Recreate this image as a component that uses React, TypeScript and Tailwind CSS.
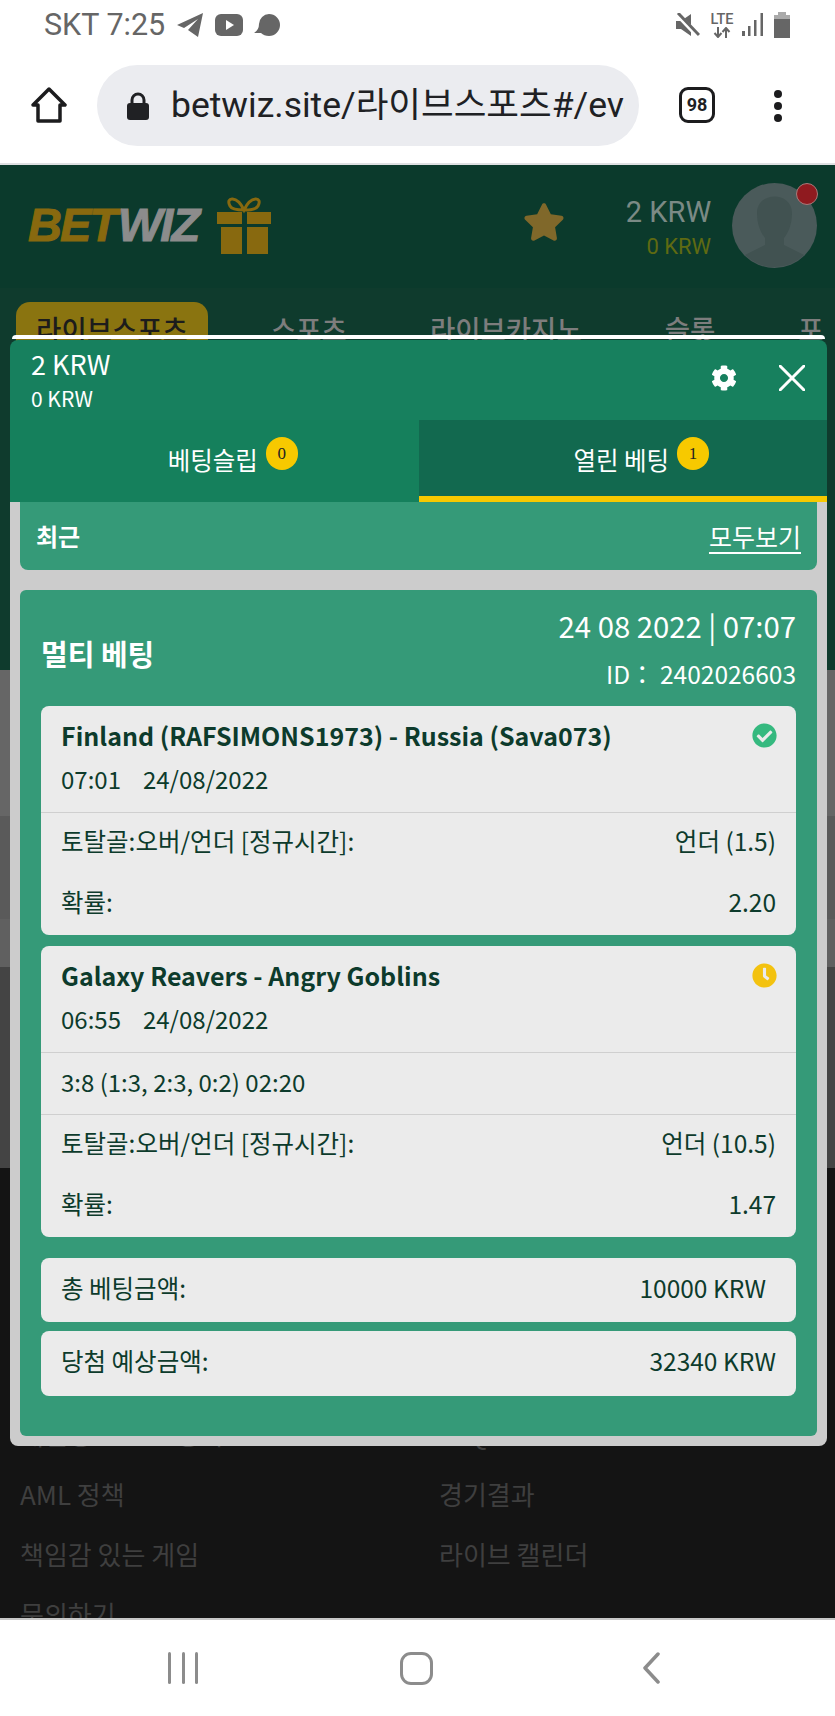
import { FaCheckCircle, FaClock, FaCog, FaStar } from 'react-icons/fa';

const kr = "font-['Noto_Sans_CJK_KR','Noto_Sans',sans-serif]";

function StatusBar() {
  return (
    <div className="flex h-[50px] items-center pl-[44px] pr-[45px] text-[#666]">
      <span className="font-['Roboto',sans-serif] text-[30.5px] leading-none">SKT 7:25</span>
      <svg className="ml-[12px] h-[24px] w-[27px]" viewBox="0 0 27 24" fill="#666">
        <path d="M26 0 L0 12 L7 15 L21 6 L11 17 L21 24 Z" />
      </svg>
      <svg className="ml-[11px] h-[22px] w-[28px]" viewBox="0 0 28 22">
        <rect width="28" height="22" rx="6" fill="#666" />
        <path d="M11 6 L19 11 L11 16 Z" fill="#fff" />
      </svg>
      <svg className="ml-[11px] h-[23px] w-[26px]" viewBox="0 0 26 23" fill="#666">
        <path d="M15 0 A11 11 0 0 1 15 22 Q10 22 7 19 L0 19 Q5 16 5 10 A10.500 10.500 0 0 1 15 0 Z" />
      </svg>
      <svg className="ml-auto h-[24px] w-[24px]" viewBox="0 0 24 24" fill="#666">
        <path d="M0 8 H5 L15 1 V23 L5 16 H0 Z" />
        <path d="M1 1 L22 23" stroke="#fff" strokeWidth="5" />
        <path d="M2 0 L23 22" stroke="#666" strokeWidth="3" />
      </svg>
      <div className="ml-[9px] flex w-[26px] flex-col items-center">
        <span className="font-['Roboto',sans-serif] text-[14.5px] font-medium leading-[13px]">LTE</span>
        <svg className="mt-[1px] h-[11px] w-[20px]" viewBox="0 0 20 11" fill="none" stroke="#666" strokeWidth="2">
          <path d="M6 0 V9 M2.500 6 L6 10 L9.500 6" />
          <path d="M14 11 V2 M10.500 5 L14 1 L17.500 5" />
        </svg>
      </div>
      <svg className="ml-[7px] h-[24px] w-[22px]" viewBox="0 0 22 24" fill="#666">
        <rect x="0" y="18" width="3" height="5" />
        <rect x="6" y="13" width="2.500" height="10" />
        <rect x="12" y="7" width="2.500" height="16" />
        <rect x="18.500" y="0" width="2.500" height="23" />
      </svg>
      <svg className="ml-[10px] h-[26px] w-[16px]" viewBox="0 0 16 26">
        <rect x="4" y="0" width="8" height="5" fill="#aaa" />
        <rect x="0" y="3" width="16" height="4" fill="#aaa" />
        <rect x="0" y="7" width="16" height="19" fill="#666" />
      </svg>
    </div>
  );
}

function BrowserBar() {
  return (
    <div className="flex h-[115px] items-start border-b-2 border-[#dfe0e2] pt-[15px] text-[#202124]">
      <svg className="ml-[31px] mt-[22px] h-[36px] w-[36px]" viewBox="0 0 36 36" fill="none" stroke="#1c1c1e" strokeWidth="3.500" strokeLinejoin="round">
        <path d="M18 2 L34 18 H29 V34 H7 V18 H2 Z" />
      </svg>
      <div className="ml-[30px] flex h-[81px] w-[542px] items-center overflow-hidden rounded-[41px] bg-[#ebecf0] pl-[30px]">
        <svg className="h-[28px] w-[22px] shrink-0" viewBox="0 0 22 28">
          <path d="M5 12 V8 A6 6 0 0 1 17 8 V12" fill="none" stroke="#202124" strokeWidth="3" />
          <rect x="0" y="11" width="22" height="17" rx="3" fill="#202124" />
        </svg>
        <div className="ml-[22px] w-[454px] overflow-hidden whitespace-nowrap font-['Roboto','Noto_Sans_CJK_KR',sans-serif] text-[35.5px] leading-none">
          betwiz.site/라이브스포츠#/event
        </div>
      </div>
      <div className="ml-[40px] mt-[22px] flex h-[36px] w-[36px] items-center justify-center rounded-[9px] border-[3.5px] border-[#1c1c1e] font-['Roboto',sans-serif] text-[18px] font-bold leading-none">
        98
      </div>
      <div className="ml-[59px] mt-[25px] flex flex-col gap-[4px]">
        <span className="h-[8px] w-[8px] rounded-full bg-[#1c1c1e]" />
        <span className="h-[8px] w-[8px] rounded-full bg-[#1c1c1e]" />
        <span className="h-[8px] w-[8px] rounded-full bg-[#1c1c1e]" />
      </div>
    </div>
  );
}

function SiteBehind() {
  return (
    <div className="flex min-h-0 flex-1 flex-col overflow-hidden bg-[#141414]">
      <div className="flex h-[123px] shrink-0 items-start bg-[#0b3a2c]">
        <div className="ml-[28px] mt-[35px] flex font-['Liberation_Sans',sans-serif] text-[47px] font-bold italic leading-[50px] tracking-[-2px]">
          <span className="text-[#88690f] [-webkit-text-stroke:1px_#88690f]">BET</span>
          <span className="ml-[2px] text-[#8c8c8c] [-webkit-text-stroke:1px_#8c8c8c]">WIZ</span>
        </div>
        <svg className="ml-[19px] mt-[30px] h-[60px] w-[54px]" viewBox="0 0 54 60" fill="#88690f">
          <path d="M27 15 C20 0 8 2 13 11 C15 15 22 15 27 15 C32 15 39 15 41 11 C46 2 34 0 27 15 Z" fill="none" stroke="#88690f" strokeWidth="3" />
          <rect x="0" y="17" width="25" height="12" />
          <rect x="30" y="17" width="24" height="12" />
          <rect x="4" y="32" width="21" height="27" />
          <rect x="30" y="32" width="21" height="27" />
        </svg>
        <FaStar className="ml-[252px] mt-[36px] text-[42px] text-[#80682a]" />
        <div className="ml-[0px] mt-[30px] flex w-[146px] flex-col items-end font-['Roboto',sans-serif]">
          <span className="text-[29px] leading-[34px] text-[#7b8a85]">2 KRW</span>
          <span className="mt-[3px] text-[22px] leading-[30px] text-[#5f6a12]">0 KRW</span>
        </div>
        <div className="relative ml-[21px] mt-[18px] h-[85px] w-[85px] rounded-full bg-[#4a5a5a]">
          <svg className="h-[85px] w-[85px]" viewBox="0 0 85 85" fill="#415251">
            <path d="M25 30 C25 8 60 8 60 30 C60 42 56 50 52 55 V62 L72 72 A42 42 0 0 1 13 72 L33 62 V55 C29 50 25 42 25 30 Z" />
          </svg>
          <span className="absolute right-[-1px] top-[0px] h-[22px] w-[22px] rounded-full border border-[#a87a7a] bg-[#8f1a1f]" />
        </div>
      </div>
      <div className={`flex h-[382px] shrink-0 items-start bg-[#0f3b2d] pt-[14px] text-[27.5px] font-medium leading-none text-[#7d7d7d] ${kr}`}>
        <div className="ml-[16px] flex h-[60px] w-[192px] justify-center rounded-[14px] bg-[#8a7410] pt-[13px] text-[#1c1c1c]">라이브스포츠</div>
        <div className="ml-[63px] pt-[13px]">스포츠</div>
        <div className="ml-[83px] pt-[13px]">라이브카지노</div>
        <div className="ml-[83px] pt-[13px]">슬롯</div>
        <div className="ml-[83px] pt-[13px]">포</div>
      </div>
      <div className="h-[146px] shrink-0 bg-[#666]" />
      <div className="h-[103px] shrink-0 bg-[#5a5a5a]" />
      <div className="h-[48px] shrink-0 bg-[#606060]" />
      <div className="h-[201px] shrink-0 bg-[#444]" />
      <div className={`grid grid-cols-[419px_1fr] gap-y-[24px] pl-[20px] pt-[248px] text-[26px] leading-[36px] text-[#3f3f3f] ${kr}`}>
        <span>개인정보 보호 정책</span>
        <span>FAQ</span>
        <span>AML 정책</span>
        <span>경기결과</span>
        <span>책임감 있는 게임</span>
        <span>라이브 캘린더</span>
        <span>문의하기</span>
      </div>
    </div>
  );
}

function Row({ label, value }: { label: string; value: string }) {
  return (
    <div className="flex h-[61px] items-center justify-between px-[20px] pb-[4px] text-[24.5px] leading-none">
      <span>{label}</span>
      <span>{value}</span>
    </div>
  );
}

function MatchHead({ title, time, date, done }: { title: string; time: string; date: string; done?: boolean }) {
  return (
    <div className="h-[107px] border-b border-[#cfcfcf] px-[20px] pt-[11px]">
      <div className="flex h-[36px] items-center justify-between">
        <span className="text-[25px] font-bold leading-none">{title}</span>
        {done ? (
          <FaCheckCircle className="mr-[-1px] text-[25px] text-[#35b97f]" />
        ) : (
          <FaClock className="mr-[-1px] text-[25px] text-[#f3c20f]" />
        )}
      </div>
      <div className="mt-[8px] flex h-[36px] items-center text-[24px] leading-none">
        <span>{time}</span>
        <span className="ml-[22px]">{date}</span>
      </div>
    </div>
  );
}

function Badge({ n }: { n: string }) {
  return (
    <span className="ml-[8px] flex h-[33px] w-[32px] items-center justify-center rounded-full bg-[#f7c900] font-['Liberation_Serif',serif] text-[17px] text-[#222]">
      {n}
    </span>
  );
}

function BetModal() {
  return (
    <div className={`absolute left-[10px] top-[335px] w-[817px] ${kr}`}>
      <div className="mx-[2px] mb-px h-[4px] rounded-t-[4px] bg-white" />
      <div className="flex h-[80px] items-start rounded-t-[8px] bg-[#17805e] pl-[21px] text-white">
        <div className="pt-[6px]">
          <div className="text-[27px] leading-[36px]">2 KRW</div>
          <div className="mt-[2px] text-[21px] leading-[28px]">0 KRW</div>
        </div>
        <FaCog className="ml-[600px] mt-[25px] text-[26px]" />
        <svg className="ml-[42px] mt-[25px] h-[26px] w-[26px]" viewBox="0 0 26 26" stroke="#fff" strokeWidth="3" strokeLinecap="round">
          <path d="M1 1 L25 25 M25 1 L1 25" />
        </svg>
      </div>
      <div className="grid h-[82px] grid-cols-2 text-[24.5px] leading-none text-white">
        <div className="flex items-start justify-center bg-[#15805c] pl-[37px] pt-[17px]">
          <span className="mt-[11px]">베팅슬립</span>
          <Badge n="0" />
        </div>
        <div className="flex items-start justify-center border-b-[6px] border-[#f7c900] bg-[#12694f] pl-[37px] pt-[17px]">
          <span className="mt-[11px]">열린 베팅</span>
          <Badge n="1" />
        </div>
      </div>
      <div className="rounded-b-[8px] bg-[#cccccc] px-[10px] pb-[10px]">
        <div className="flex h-[68px] items-center justify-between rounded-b-[8px] bg-[#359a78] pl-[16px] pr-[16px] text-[24px] leading-none text-white">
          <span className="font-bold">최근</span>
          <span className="text-[25px] underline underline-offset-[5px]">모두보기</span>
        </div>
        <div className="mt-[20px] h-[846px] rounded-[6px] bg-[#359a78] px-[21px] pt-[13px] text-[#0d3b2c]">
          <div className="flex h-[103px] items-start justify-between text-white">
            <span className="mt-[32px] text-[29px] font-bold leading-[36px]">멀티 베팅</span>
            <div className="flex flex-col items-end">
              <span className="text-[29.3px] leading-[44px]">24 08 2022 | 07:07</span>
              <span className="mt-[9px] text-[24.5px] leading-[36px]">ID： 2402026603</span>
            </div>
          </div>
          <div className="h-[229px] rounded-[8px] bg-[#ebebeb]">
            <MatchHead title="Finland (RAFSIMONS1973) - Russia (Sava073)" time="07:01" date="24/08/2022" done />
            <Row label="토탈골:오버/언더 [정규시간]:" value="언더 (1.5)" />
            <Row label="확률:" value="2.20" />
          </div>
          <div className="mt-[11px] h-[291px] rounded-[8px] bg-[#ebebeb]">
            <MatchHead title="Galaxy Reavers - Angry Goblins" time="06:55" date="24/08/2022" />
            <div className="flex h-[62px] items-center border-b border-[#cfcfcf] px-[20px] pb-[4px] text-[24px] leading-none">
              3:8 (1:3, 2:3, 0:2) 02:20
            </div>
            <Row label="토탈골:오버/언더 [정규시간]:" value="언더 (10.5)" />
            <Row label="확률:" value="1.47" />
          </div>
          <div className="mt-[21px] flex h-[64px] items-center justify-between rounded-[8px] bg-[#ebebeb] pb-[4px] pl-[20px] pr-[30px] text-[24.5px] leading-none">
            <span>총 베팅금액:</span>
            <span>10000 KRW</span>
          </div>
          <div className="mt-[9px] flex h-[65px] items-center justify-between rounded-[8px] bg-[#ebebeb] px-[20px] pb-[4px] text-[24.5px] leading-none">
            <span>당첨 예상금액:</span>
            <span>32340 KRW</span>
          </div>
        </div>
      </div>
    </div>
  );
}

function NavBar() {
  return (
    <div className="flex h-[98px] shrink-0 items-start border-t-2 border-[#c8c8c8] bg-white pt-[32px]">
      <div className="ml-[168px] flex h-[32px] w-[30px] justify-between">
        <span className="h-full w-[3px] rounded bg-[#8c8c8c]" />
        <span className="h-full w-[3px] rounded bg-[#8c8c8c]" />
        <span className="h-full w-[3px] rounded bg-[#8c8c8c]" />
      </div>
      <div className="ml-[202px] h-[33px] w-[33px] rounded-[11px] border-[3.5px] border-[#8c8c8c]" />
      <svg className="ml-[209px] h-[32px] w-[18px]" viewBox="0 0 18 32" fill="none" stroke="#8c8c8c" strokeWidth="3.500" strokeLinecap="round" strokeLinejoin="round">
        <path d="M16 2 L3 16 L16 30" />
      </svg>
    </div>
  );
}

export default function App() {
  return (
    <div className="relative flex h-[1716px] w-[835px] flex-col overflow-hidden bg-white">
      <StatusBar />
      <BrowserBar />
      <SiteBehind />
      <NavBar />
      <BetModal />
    </div>
  );
}
